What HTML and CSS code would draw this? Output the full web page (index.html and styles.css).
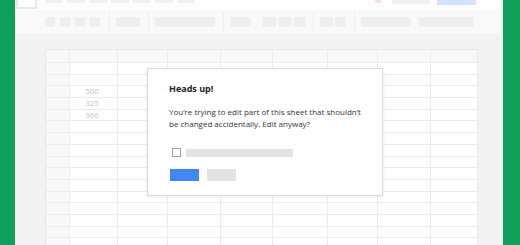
FILE: index.html
```html
<!DOCTYPE html>
<html lang="en">
<head>
    <meta charset="UTF-8">
    <meta name="viewport" content="width=device-width, initial-scale=1.0">
    <title>Heads up</title>
    <link rel="stylesheet" href="styles.css">
</head>
<body>
    <div class="window">
        <div class="titlebar">
            <div class="logo"></div>
            <div class="menu">
                <span></span><span></span><span></span><span></span><span></span><span></span><span></span>
            </div>
            <div class="title-actions">
                <span class="dot"></span>
                <span class="ghost"></span>
                <span class="share"></span>
            </div>
        </div>
        <div class="toolbar">
            <span class="tool sq"></span>
            <span class="tool sq"></span>
            <span class="tool sq"></span>
            <span class="tool sq"></span>
            <span class="sep"></span>
            <span class="tool w24"></span>
            <span class="sep"></span>
            <span class="tool w60"></span>
            <span class="sep"></span>
            <span class="tool w21"></span>
            <span class="tool w14 gap"></span>
            <span class="tool w12"></span>
            <span class="tool w12"></span>
            <span class="sep"></span>
            <span class="tool w13"></span>
            <span class="tool w11"></span>
            <span class="sep"></span>
            <span class="tool w50"></span>
            <span class="tool w55"></span>
        </div>
        <div class="sheet">
            <div class="grid" id="grid">
                <!-- ячейки строятся скриптом ниже -->
            </div>
            <div class="dialog">
                <h3>Heads up!</h3>
                <p>You’re trying to edit part of this sheet that shouldn’t be changed accidentally. Edit anyway?</p>
                <div class="check-row">
                    <span class="checkbox"></span>
                    <span class="check-label"></span>
                </div>
                <div class="actions">
                    <span class="btn-ok"></span>
                    <span class="btn-cancel"></span>
                </div>
            </div>
        </div>
    </div>
    <script>
        const cols = 9;
        const rows = 17;
        const values = { 3: '500', 4: '325', 5: '966' }; // значения во втором столбце

        const grid = document.getElementById('grid');
        for (let r = 0; r < rows; r++) {
            for (let c = 0; c < cols; c++) {
                const cell = document.createElement('div');
                cell.className = 'cell';
                if (r === 0) cell.classList.add('head');
                if (c === 0) cell.classList.add('rowhead');
                if (c === 1 && values[r]) cell.textContent = values[r];
                grid.appendChild(cell);
            }
        }
    </script>
</body>
</html>
```

FILE: styles.css
```css
body {
    display: flex;
    height: 245px;
    margin: 0;
    overflow: hidden;
    background: #11a05a;
    font-family: "Open Sans", Arial, sans-serif;
}
.window {
    display: flex;
    flex-direction: column;
    width: 485px;
    margin-left: 15px;
    border-right: 3px solid #f7f7f7;
    background: #f3f3f3;
}
.titlebar {
    display: flex;
    flex-shrink: 0;
    align-items: flex-start;
    height: 10px;
    background: #fdfdfd;
}
.logo {
    width: 17px;
    height: 7px;
    margin-left: 1px;
    border: 2px solid #e1ebe4;
    border-top: none;
    background: #fff;
}
.menu {
    display: flex;
    gap: 4px;
    margin-left: 8px;
}
.menu span {
    width: 18px;
    height: 3px;
    background: #f0f0f0;
}
.title-actions {
    display: flex;
    align-items: flex-start;
    margin-left: auto;
    margin-right: 24px;
}
.dot {
    width: 6px;
    height: 3px;
    border-radius: 0 0 3px 3px;
    background: #f7dcd9;
}
.ghost {
    width: 38px;
    height: 4px;
    margin-left: 11px;
    background: #f1f1f1;
}
.share {
    width: 39px;
    height: 5px;
    margin-left: 7px;
    background: #d3e3fc;
}
.toolbar {
    display: flex;
    flex-shrink: 0;
    align-items: center;
    height: 24px;
    padding-left: 30px;
    background: #f9f9f9;
    border-bottom: 1px solid #f0f0f0;
}
.tool {
    height: 10px;
    margin-right: 4px;
    background: #eeeeee;
}
.sq { width: 10px; margin-right: 5px; }
.w11 { width: 11px; }
.w12 { width: 12px; margin-right: 3px; }
.w13 { width: 13px; margin-right: 2px; }
.w14 { width: 14px; margin-right: 3px; }
.w21 { width: 21px; }
.w24 { width: 24px; }
.w50 { width: 50px; margin-right: 8px; }
.w55 { width: 55px; }
.w60 { width: 60px; }
.gap { margin-left: 7px; }
.sep {
    width: 1px;
    height: 20px;
    margin: 0 6px 0 4px;
    background: #eeeeee;
}
.sheet {
    position: relative;
    flex: 1;
    min-height: 0;
    overflow: hidden;
    padding: 14px 0 0 30px;
}
.grid {
    display: grid;
    grid-template-columns: 24px 48px 50px 53px 52px 55px 50px 53px 47px;
    grid-template-rows: 13px;
    grid-auto-rows: 11.7px;
    width: max-content;
    border-top: 1px solid #e6e6e6;
    border-left: 1px solid #e6e6e6;
    background: #fff;
}
.cell {
    box-sizing: border-box;
    border-right: 1px solid #ebebeb;
    border-bottom: 1px solid #ebebeb;
    font-size: 7.5px;
    line-height: 11px;
    color: #c4c4c4;
    text-align: center;
    padding-right: 3px;
}
.head,
.rowhead {
    background: #f8f8f8;
}
.dialog {
    position: absolute;
    left: 132px;
    top: 33px;
    box-sizing: border-box;
    width: 236px;
    height: 128px;
    padding: 13px 14px 0 21px;
    background: #fff;
    border: 1px solid #dadada;
    box-shadow: 0 1px 3px rgba(0, 0, 0, 0.08);
    color: #222;
}
.dialog h3 {
    margin: 0;
    font-size: 9px;
    line-height: 13px;
    font-weight: bold;
}
.dialog p {
    margin: 11px 0 0;
    font-size: 8px;
    line-height: 12px;
    color: #333;
}
.check-row {
    display: flex;
    align-items: center;
    margin-top: 18px;
    padding-left: 3px;
}
.checkbox {
    box-sizing: border-box;
    width: 9px;
    height: 9px;
    border: 1px solid #9e9e9e;
}
.check-label {
    width: 107px;
    height: 8px;
    margin-left: 5px;
    background: #e3e3e3;
}
.actions {
    display: flex;
    gap: 8px;
    margin-top: 12px;
    padding-left: 1px;
}
.btn-ok {
    width: 29px;
    height: 12px;
    background: #4285f4;
}
.btn-cancel {
    width: 29px;
    height: 12px;
    background: #e3e3e3;
}
```
